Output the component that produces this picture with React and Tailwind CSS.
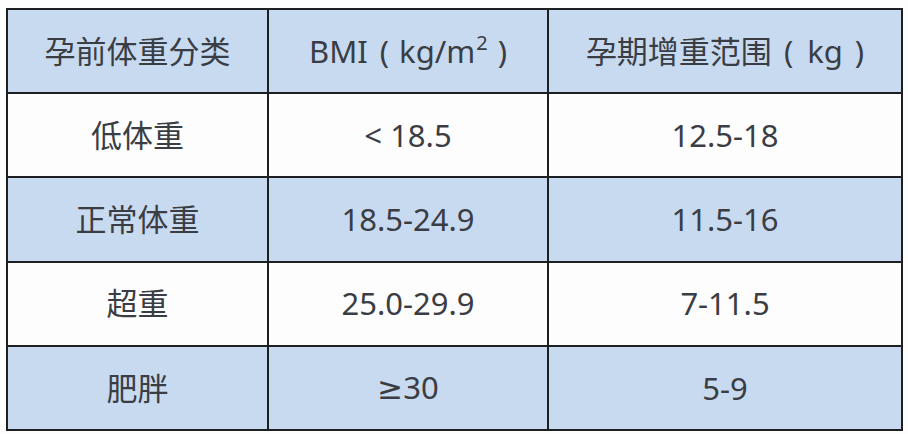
const rows = [
  { kind: '低体重', bmi: '< 18.5', gain: '12.5-18' },
  { kind: '正常体重', bmi: '18.5-24.9', gain: '11.5-16' },
  { kind: '超重', bmi: '25.0-29.9', gain: '7-11.5' },
  { kind: '肥胖', bmi: '≥30', gain: '5-9' },
];

const cell = 'border-2 border-[#1e1f22] text-center align-middle';

export default function App() {
  return (
    <div
      className="w-[908px] h-[434px] bg-[#fdfdfd] pl-[6px] pt-[8px] text-[#3a3d44] text-[31px]"
      style={{ fontFamily: '"Noto Sans", "DejaVu Sans", "Noto Sans CJK SC", sans-serif' }}
    >
      <table className="w-[897px] h-[423px] border-collapse table-fixed">
        <colgroup>
          <col className="w-[261px]" />
          <col className="w-[280px]" />
          <col />
        </colgroup>
        <thead>
          <tr className="bg-[#c8daf0] h-[84px]">
            <th className={`${cell} font-normal`}>孕前体重分类</th>
            <th className={`${cell} font-normal`}>
              BMI<span className="ml-[12px] mr-[10px]">(</span>kg/m
              <sup className="text-[20px] -top-[13px] ml-[1px]">2</sup>
              <span className="ml-[10px]">)</span>
            </th>
            <th className={`${cell} font-normal`}>
              孕期增重范围<span className="ml-[12px] mr-[14px]">(</span>kg
              <span className="ml-[12px]">)</span>
            </th>
          </tr>
        </thead>
        <tbody>
          {rows.map((r, i) => (
            <tr key={r.kind} className={`h-[84px] ${i % 2 ? 'bg-[#c8daf0]' : 'bg-[#fdfdfd]'}`}>
              <td className={cell}>{r.kind}</td>
              <td className={cell}>
                {r.bmi.startsWith('≥') ? (
                  <>
                    <span style={{ fontFamily: '"DejaVu Sans", sans-serif' }}>≥</span>30
                  </>
                ) : (
                  r.bmi
                )}
              </td>
              <td className={cell}>{r.gain}</td>
            </tr>
          ))}
        </tbody>
      </table>
    </div>
  );
}
